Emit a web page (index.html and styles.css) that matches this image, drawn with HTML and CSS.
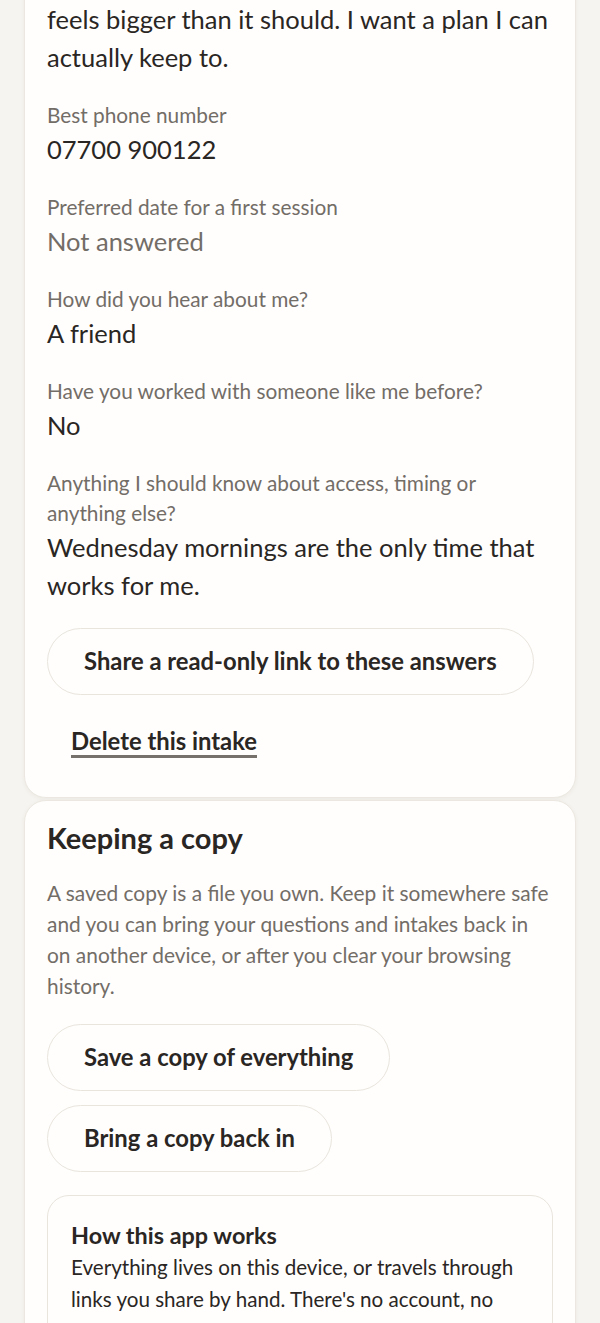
FILE: index.html
```html
<!DOCTYPE html>
<html lang="en">
<head>
<meta charset="utf-8">
<title>Intake</title>
<link rel="stylesheet" href="styles.css">
</head>
<body>
<main class="page">
  <section class="card card-intake">
    <div class="fields">
      <div class="field">
        <p class="value">feels bigger than it should. I want a plan I can actually keep to.</p>
      </div>
      <div class="field">
        <p class="label">Best phone number</p>
        <p class="value">07700 900122</p>
      </div>
      <div class="field">
        <p class="label">Preferred date for a first session</p>
        <p class="value muted">Not answered</p>
      </div>
      <div class="field">
        <p class="label">How did you hear about me?</p>
        <p class="value">A friend</p>
      </div>
      <div class="field">
        <p class="label">Have you worked with someone like me before?</p>
        <p class="value">No</p>
      </div>
      <div class="field">
        <p class="label">Anything I should know about access, timing or anything else?</p>
        <p class="value">Wednesday mornings are the only time that works for me.</p>
      </div>
    </div>
    <div class="actions">
      <button class="pill" type="button">Share a read-only link to these answers</button>
      <button class="link-btn" type="button">Delete this intake</button>
    </div>
  </section>

  <section class="card card-copy">
    <h2 class="card-title">Keeping a copy</h2>
    <p class="lede">A saved copy is a file you own. Keep it somewhere safe and you can bring your questions and intakes back in on another device, or after you clear your browsing history.</p>
    <div class="actions">
      <button class="pill" type="button">Save a copy of everything</button>
      <button class="pill" type="button">Bring a copy back in</button>
    </div>
    <div class="info-box">
      <h3 class="info-title">How this app works</h3>
      <p class="info-text">Everything lives on this device, or travels through links you share by hand. There's no account, no cloud, nobody watching the numbers. Your answers stay yours for as long as you keep them.</p>
    </div>
  </section>
</main>
</body>
</html>
```

FILE: styles.css
```css
* { box-sizing: border-box; }

html, body {
  margin: 0;
  padding: 0;
}

body {
  background: #f6f4f0;
  color: #2a2623;
  font-family: Lato, "Noto Sans", "Liberation Sans", sans-serif;
  overflow: hidden;
}

.page {
  padding: 0 24px;
}

.card {
  background: #fffefd;
  border: 1px solid #ece8e1;
  border-radius: 22px;
  padding: 22px;
  box-shadow: 0 1px 4px rgba(80, 60, 30, 0.06);
}

.card-intake {
  margin-top: -23px;
  border-top-left-radius: 0;
  border-top-right-radius: 0;
}

.card-copy {
  margin-top: 2px;
}

.fields {
  display: flex;
  flex-direction: column;
  gap: 24px;
}

.field p { margin: 0; }

.label {
  font-size: 20.8px;
  line-height: 30px;
  color: #736d67;
}

.value {
  font-size: 25.5px;
  line-height: 38px;
  color: #2a2623;
}

.value.muted {
  color: #736d67;
}

.actions {
  display: flex;
  flex-direction: column;
  align-items: flex-start;
  gap: 13px;
  margin-top: 24px;
}

.pill {
  font-family: inherit;
  font-size: 23.8px;
  font-weight: 700;
  line-height: 31px;
  color: #2a2623;
  background: #fffefd;
  border: 1px solid #e9e5dd;
  border-radius: 999px;
  padding: 17px 36px;
  cursor: pointer;
}

.link-btn {
  font-family: inherit;
  font-size: 23.8px;
  font-weight: 700;
  line-height: 31px;
  color: #2a2623;
  background: transparent;
  border: 1px solid transparent;
  padding: 17px 23px;
  text-decoration: underline;
  text-decoration-color: #77716b;
  text-decoration-thickness: 3px;
  text-underline-offset: 5px;
  cursor: pointer;
}

.card-copy .actions {
  margin-top: 23px;
  gap: 14px;
}

.card-title {
  margin: 0 0 24px;
  font-size: 29px;
  line-height: 30px;
  font-weight: 700;
  color: #2a2623;
}

.lede {
  margin: 0;
  font-size: 20.9px;
  line-height: 31px;
  color: #736d67;
}

.info-box {
  margin-top: 23px;
  border: 1px solid #e9e5dd;
  border-radius: 22px;
  padding: 24px 23px;
  background: #fffefd;
}

.info-title {
  margin: 0;
  font-size: 23.4px;
  line-height: 31px;
  font-weight: 700;
  color: #2a2623;
}

.info-text {
  margin: 0;
  font-size: 20.6px;
  line-height: 32px;
  color: #2a2623;
}
```
